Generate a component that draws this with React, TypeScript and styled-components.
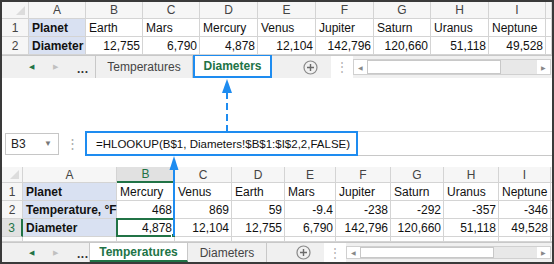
import React from 'react';
import styled, { createGlobalStyle } from 'styled-components';

const GREEN = '#217346';
const BLUE = '#1e8cf0';
const GRID = '#d4d4d4';
const FILL = '#d9e1f2';

const GlobalStyle = createGlobalStyle`
  html, body {
    margin: 0;
    padding: 0;
    background: #fff;
  }
  body {
    font-family: "Liberation Sans", Arial, sans-serif;
    color: #222;
  }
`;

const Frame = styled.div`
  position: relative;
  width: 554px;
  height: 264px;
  box-sizing: border-box;
  border: 2px solid #3a3a3a;
  background: #fff;
  overflow: hidden;
  display: flex;
  flex-direction: column;
`;

const Grid = styled.div<{ $cols: string; $rows: string }>`
  display: grid;
  grid-template-columns: ${({ $cols }) => $cols};
  grid-template-rows: ${({ $rows }) => $rows};
  font-size: 12px;
`;

const Corner = styled.div`
  position: relative;
  background: #f6f6f6;
  border-right: 1px solid ${GRID};
  border-bottom: 1px solid ${GRID};
  box-sizing: border-box;

  &::after {
    content: '';
    position: absolute;
    right: 3px;
    bottom: 3px;
    border-style: solid;
    border-width: 0 0 9px 9px;
    border-color: transparent transparent #dcdcdc transparent;
  }
`;

const ColHead = styled.div<{ $active?: boolean }>`
  display: flex;
  align-items: center;
  justify-content: center;
  box-sizing: border-box;
  background: ${({ $active }) => ($active ? '#e1e1e1' : '#f6f6f6')};
  color: ${({ $active }) => ($active ? GREEN : '#444')};
  border-right: 1px solid ${GRID};
  border-bottom: ${({ $active }) => ($active ? `2px solid ${GREEN}` : `1px solid ${GRID}`)};
`;

const RowHead = styled.div<{ $active?: boolean }>`
  display: flex;
  align-items: center;
  justify-content: center;
  box-sizing: border-box;
  background: ${({ $active }) => ($active ? '#e1e1e1' : '#f6f6f6')};
  color: ${({ $active }) => ($active ? GREEN : '#444')};
  border-right: ${({ $active }) => ($active ? `2px solid ${GREEN}` : `1px solid ${GRID}`)};
  border-bottom: 1px solid ${GRID};
  font-size: 12px;
`;

const Cell = styled.div<{ $right?: boolean; $bold?: boolean; $fill?: boolean; $selected?: boolean }>`
  position: relative;
  display: flex;
  align-items: center;
  justify-content: ${({ $right }) => ($right ? 'flex-end' : 'flex-start')};
  padding: 0 2px 0 3px;
  box-sizing: border-box;
  white-space: nowrap;
  overflow: visible;
  font-weight: ${({ $bold }) => ($bold ? 700 : 400)};
  background: ${({ $fill }) => ($fill ? FILL : '#fff')};
  border-right: 1px solid ${GRID};
  border-bottom: 1px solid ${GRID};
  color: #111;

  ${({ $selected }) =>
    $selected &&
    `
    &::before {
      content: '';
      position: absolute;
      left: -1px;
      top: -1px;
      right: -1px;
      bottom: -1px;
      border: 2px solid ${GREEN};
    }
    &::after {
      content: '';
      position: absolute;
      right: -4px;
      bottom: -4px;
      width: 5px;
      height: 5px;
      background: ${GREEN};
      border: 1px solid #fff;
    }
  `}
`;

const TabBar = styled.div<{ $height: number }>`
  display: flex;
  align-items: stretch;
  height: ${({ $height }) => $height}px;
  background: #f0f0f0;
  border-top: 1px solid #c8c8c8;
  box-sizing: border-box;
  font-size: 12px;
`;

const NavArea = styled.div<{ $width: number }>`
  display: flex;
  align-items: center;
  width: ${({ $width }) => $width}px;
  box-sizing: border-box;
  padding-left: 27px;
  gap: 19px;
  border-right: 1px solid #c8c8c8;
`;

const NavArrow = styled.span<{ $on?: boolean }>`
  font-size: 7px;
  color: ${({ $on }) => ($on ? GREEN : '#c0c0c0')};
`;

const Ellipsis = styled.span`
  font-weight: 700;
  color: #333;
  letter-spacing: 0.5px;
  margin-top: 3px;
`;

const Tab = styled.div<{ $width: number; $active?: boolean; $callout?: boolean }>`
  display: flex;
  align-items: center;
  justify-content: center;
  width: ${({ $width }) => $width}px;
  box-sizing: border-box;
  color: ${({ $active }) => ($active ? GREEN : '#444')};
  font-weight: ${({ $active }) => ($active ? 700 : 400)};
  background: ${({ $active }) => ($active ? '#fff' : 'transparent')};
  border-right: 1px solid #c8c8c8;
  border-bottom: ${({ $active, $callout }) => ($active && !$callout ? `2px solid ${GREEN}` : 'none')};
  ${({ $callout }) => $callout && `border: 2px solid ${BLUE}; margin-top: -2px;`}
`;

const AddArea = styled.div<{ $width: number }>`
  display: flex;
  align-items: center;
  justify-content: flex-end;
  width: ${({ $width }) => $width}px;
`;

const SplitDots = styled.div`
  display: flex;
  align-items: center;
  justify-content: center;
  width: 22px;
  margin-left: 13px;
  color: #b0b0b0;
  font-size: 12px;
  background: #fff;
`;

const ScrollBar = styled.div`
  flex: 1;
  display: flex;
  align-items: stretch;
  margin: 3px 1px 3px 0;
  background: #e8e8e8;
  border: 1px solid #d0d0d0;
  box-sizing: border-box;
`;

const ScrollBtn = styled.div`
  width: 13px;
  display: flex;
  align-items: center;
  justify-content: center;
  font-size: 6px;
  color: #888;
  background: #fff;
`;

const Thumb = styled.div<{ $width: number }>`
  width: ${({ $width }) => $width}px;
  background: #fff;
  border: 1px solid #c8c8c8;
  box-sizing: border-box;
`;

const Track = styled.div`
  flex: 1;
`;

const Gap = styled.div<{ $h: number }>`
  height: ${({ $h }) => $h}px;
  flex-shrink: 0;
`;

const FormulaBar = styled.div`
  display: flex;
  align-items: center;
  height: 25px;
  flex-shrink: 0;
`;

const NameBox = styled.div`
  display: flex;
  align-items: center;
  justify-content: space-between;
  width: 54px;
  height: 22px;
  margin-left: 3px;
  padding: 0 6px 0 5px;
  box-sizing: border-box;
  border: 1px solid #c6c6c6;
  font-size: 12px;
  color: #222;
`;

const Caret = styled.span`
  font-size: 8px;
  color: #777;
`;

const FormulaDots = styled.div`
  width: 26px;
  text-align: center;
  color: #aaa;
  font-size: 13px;
`;

const FormulaField = styled.div`
  flex: 1;
  display: flex;
  height: 23px;
  border-top: 1px solid #d8d8d8;
  border-bottom: 1px solid #c8c8c8;
`;

const FormulaText = styled.div`
  width: 273px;
  margin: -1px 0;
  box-sizing: border-box;
  border: 2px solid ${BLUE};
  display: flex;
  align-items: center;
  padding-left: 9px;
  font-size: 11.5px;
  color: #111;
  white-space: nowrap;
`;

const Overlay = styled.svg`
  position: absolute;
  left: 0;
  top: 0;
  pointer-events: none;
`;

type Row = { n: string; cells: string[]; active?: boolean; sel?: number };

const topCols = ['A', 'B', 'C', 'D', 'E', 'F', 'G', 'H', 'I'];

const topRows: Row[] = [
  { n: '1', cells: ['Planet', 'Earth', 'Mars', 'Mercury', 'Venus', 'Jupiter', 'Saturn', 'Uranus', 'Neptune'] },
  { n: '2', cells: ['Diameter', '12,755', '6,790', '4,878', '12,104', '142,796', '120,660', '51,118', '49,528'] },
];

const bottomRows: Row[] = [
  { n: '1', cells: ['Planet', 'Mercury', 'Venus', 'Earth', 'Mars', 'Jupiter', 'Saturn', 'Uranus', 'Neptune'] },
  { n: '2', cells: ['Temperature, °F', '468', '869', '59', '-9.4', '-238', '-292', '-357', '-346'] },
  { n: '3', cells: ['Diameter', '4,878', '12,104', '12,755', '6,790', '142,796', '120,660', '51,118', '49,528'], active: true, sel: 1 },
  { n: '', cells: ['', '', '', '', '', '', '', '', ''] },
];

const isNumber = (s: string) => /^-?[\d,.]+$/.test(s);

const Sheet = ({ cols, rows, template, rowTemplate, activeCol }: {
  cols: string[];
  rows: Row[];
  template: string;
  rowTemplate: string;
  activeCol?: number;
}) => (
  <Grid $cols={template} $rows={rowTemplate}>
    <Corner />
    {cols.map((c, i) => (
      <ColHead key={c} $active={activeCol === i}>{c}</ColHead>
    ))}
    <ColHead />
    {rows.map((r, ri) => (
      <React.Fragment key={ri}>
        <RowHead $active={r.active}>{r.n}</RowHead>
        {r.cells.map((v, ci) => (
          <Cell
            key={ci}
            $right={isNumber(v)}
            $bold={ci === 0}
            $fill={ci === 0 && r.n !== ''}
            $selected={r.sel === ci}
          >
            {v}
          </Cell>
        ))}
        <Cell />
      </React.Fragment>
    ))}
  </Grid>
);

const Scroller = ({ thumb }: { thumb: number }) => (
  <ScrollBar>
    <ScrollBtn>◀</ScrollBtn>
    <Thumb $width={thumb} />
    <Track />
    <ScrollBtn>▶</ScrollBtn>
  </ScrollBar>
);

const PlusIcon = () => (
  <svg width="15" height="15" viewBox="0 0 15 15">
    <circle cx="7.5" cy="7.5" r="6.5" fill="none" stroke="#8a8a8a" strokeWidth="1.2" />
    <path d="M7.5 4v7M4 7.5h7" stroke="#6a6a6a" strokeWidth="1.4" />
  </svg>
);

const App = () => (
  <>
    <GlobalStyle />
    <Frame>
      <Sheet
        cols={topCols}
        rows={topRows}
        template="27px 57px 57px 57px 58px 58px 58px 57px 58px 57px 1fr"
        rowTemplate="17px 18px 18px"
      />
      <TabBar $height={23}>
        <NavArea $width={94}>
          <NavArrow $on>◀</NavArrow>
          <NavArrow>▶</NavArrow>
          <Ellipsis>...</Ellipsis>
        </NavArea>
        <Tab $width={97}>Temperatures</Tab>
        <Tab $width={79} $active $callout>Diameters</Tab>
        <AddArea $width={46}><PlusIcon /></AddArea>
        <SplitDots>⋮</SplitDots>
        <Scroller thumb={134} />
      </TabBar>

      <Gap $h={53} />

      <FormulaBar>
        <NameBox>B3<Caret>▼</Caret></NameBox>
        <FormulaDots>⋮</FormulaDots>
        <FormulaField>
          <FormulaText>=HLOOKUP(B$1, Diameters!$B$1:$I$2,2,FALSE)</FormulaText>
        </FormulaField>
      </FormulaBar>

      <Gap $h={11} />

      <Sheet
        cols={topCols}
        rows={bottomRows}
        template="21px 94px 58px 57px 53px 51px 55px 53px 55px 52px 1fr"
        rowTemplate="16px 18px 18px 18px 5px"
        activeCol={1}
      />
      <TabBar $height={20}>
        <NavArea $width={88}>
          <NavArrow $on>◀</NavArrow>
          <NavArrow>▶</NavArrow>
          <Ellipsis>...</Ellipsis>
        </NavArea>
        <Tab $width={98} $active>Temperatures</Tab>
        <Tab $width={79}>Diameters</Tab>
        <AddArea $width={44}><PlusIcon /></AddArea>
        <SplitDots>⋮</SplitDots>
        <Scroller thumb={134} />
      </TabBar>

      <Overlay width="550" height="260" viewBox="0 0 550 260">
        <line x1="225" y1="90" x2="225" y2="130" stroke={BLUE} strokeWidth="2" strokeDasharray="7 4" />
        <polygon points="225,77 220,91 230,91" fill={BLUE} />
        <line x1="172" y1="166" x2="172" y2="234" stroke={BLUE} strokeWidth="2" />
        <polygon points="172,154 167.5,168 176.5,168" fill={BLUE} />
      </Overlay>
    </Frame>
  </>
);

export default App;
